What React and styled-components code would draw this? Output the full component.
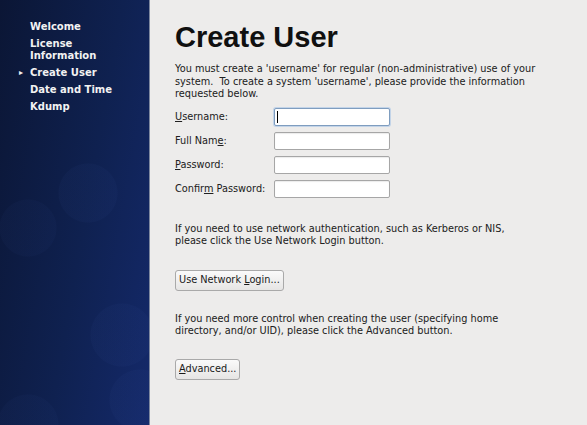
import React from 'react';
import styled, { createGlobalStyle } from 'styled-components';

const GlobalStyle = createGlobalStyle`
    html, body {
        margin: 0;
        padding: 0;
        background: #edeceb;
    }
    body {
        font-family: 'DejaVu Sans', sans-serif;
    }
`

const steps = [
    { label: 'Welcome' },
    { label: 'License Information', wrap: true },
    { label: 'Create User', current: true },
    { label: 'Date and Time' },
    { label: 'Kdump' },
];

const fields = [
    { pre: '', key: 'U', post: 'sername:', focused: true },
    { pre: 'Full Nam', key: 'e', post: ':' },
    { pre: '', key: 'P', post: 'assword:' },
    { pre: 'Confir', key: 'm', post: ' Password:' },
];

const App = () => {
    return (
        <>
            <GlobalStyle />
            <Layout>
                <Sidebar>
                    <StepList>
                        {steps.map(step => (
                            <Step key={step.label} $current={step.current}>
                                {step.wrap ? <>License<br />Information</> : step.label}
                            </Step>
                        ))}
                    </StepList>
                </Sidebar>

                <Content>
                    <Title>Create User</Title>
                    <Text $top={8}>
                        You must create a 'username' for regular (non-administrative) use of your<br />
                        system.&nbsp; To create a system 'username', please provide the information<br />
                        requested below.
                    </Text>

                    <Form>
                        {fields.map(field => (
                            <FieldRow key={field.pre + field.key}>
                                <Label>{field.pre}<u>{field.key}</u>{field.post}</Label>
                                <Input $focused={field.focused}>
                                    {field.focused && <Caret />}
                                </Input>
                            </FieldRow>
                        ))}
                    </Form>

                    <Text $top={25}>
                        If you need to use network authentication, such as Kerberos or NIS,<br />
                        please click the Use Network Login button.
                    </Text>
                    <Button $top={22}>Use Network <u>L</u>ogin...</Button>

                    <Text $top={22}>
                        If you need more control when creating the user (specifying home<br />
                        directory, and/or UID), please click the Advanced button.
                    </Text>
                    <Button $top={21}><u>A</u>dvanced...</Button>
                </Content>
            </Layout>
        </>
    )
}

export default App;


const Layout = styled.div`
    display: flex;
    width: 587px;
    height: 425px;
    overflow: hidden;
`

const Sidebar = styled.nav`
    width: 150px;
    flex-shrink: 0;
    box-sizing: border-box;
    padding-top: 21px;
    border-right: 1px solid #7d879e;
    background:
        radial-gradient(circle at 88px 193px, rgba(70, 100, 180, 0.05) 29px, transparent 30px),
        radial-gradient(circle at 28px 228px, rgba(70, 100, 180, 0.045) 28px, transparent 29px),
        radial-gradient(circle at 122px 335px, rgba(70, 100, 180, 0.05) 31px, transparent 32px),
        radial-gradient(circle at 140px 400px, rgba(70, 100, 180, 0.05) 30px, transparent 31px),
        radial-gradient(circle at 28px 425px, rgba(70, 100, 180, 0.045) 30px, transparent 31px),
        linear-gradient(100deg, #0b1635 0%, #0f2150 55%, #14296a 100%);
`

const StepList = styled.ul`
    list-style: none;
    margin: 0;
    padding: 0 0 0 30px;
    display: flex;
    flex-direction: column;
    gap: 5px;
`

const Step = styled.li`
    position: relative;
    font: 700 10px/12px 'DejaVu Sans', sans-serif;
    color: #f2f2f2;

    &::before {
        content: ${p => p.$current ? "'▸'" : "none"};
        position: absolute;
        left: -11px;
        top: 0;
        font-size: 8px;
    }
`

const Content = styled.main`
    flex: 1;
    padding: 19px 0 0 25px;
    color: #1a1a1a;
`

const Title = styled.h1`
    margin: 0;
    font: 700 29px/36px 'Liberation Sans', Arial, sans-serif;
    color: #101010;
`

const Text = styled.p`
    margin: ${p => p.$top}px 0 0;
    font: 400 9.75px/12.5px 'DejaVu Sans', sans-serif;
    color: #202020;
    white-space: nowrap;
`

const Form = styled.div`
    display: flex;
    flex-direction: column;
    gap: 6px;
    margin-top: 7px;
`

const FieldRow = styled.div`
    display: flex;
    align-items: center;
`

const Label = styled.span`
    width: 99px;
    font: 400 9.75px/12px 'DejaVu Sans', sans-serif;
    color: #202020;
`

const Input = styled.div`
    position: relative;
    width: 116px;
    height: 18px;
    box-sizing: border-box;
    background: #ffffff;
    border: 1px solid ${p => p.$focused ? '#7f9dbf' : '#a6a6a6'};
    border-radius: 2px;
    box-shadow: ${p => p.$focused ? '0 0 0 1px #c3d4e8' : 'inset 0 1px 1px rgba(0,0,0,0.08)'};
`

const Caret = styled.span`
    position: absolute;
    left: 2px;
    top: 2px;
    width: 1px;
    height: 12px;
    background: #000;
`

const Button = styled.button`
    display: block;
    margin-top: ${p => p.$top}px;
    height: 21px;
    padding: 0 3px;
    font: 400 9.75px/12px 'DejaVu Sans', sans-serif;
    color: #1a1a1a;
    background: linear-gradient(#fafafa, #e6e5e4);
    border: 1px solid #a9a9a9;
    border-radius: 3px;
`
